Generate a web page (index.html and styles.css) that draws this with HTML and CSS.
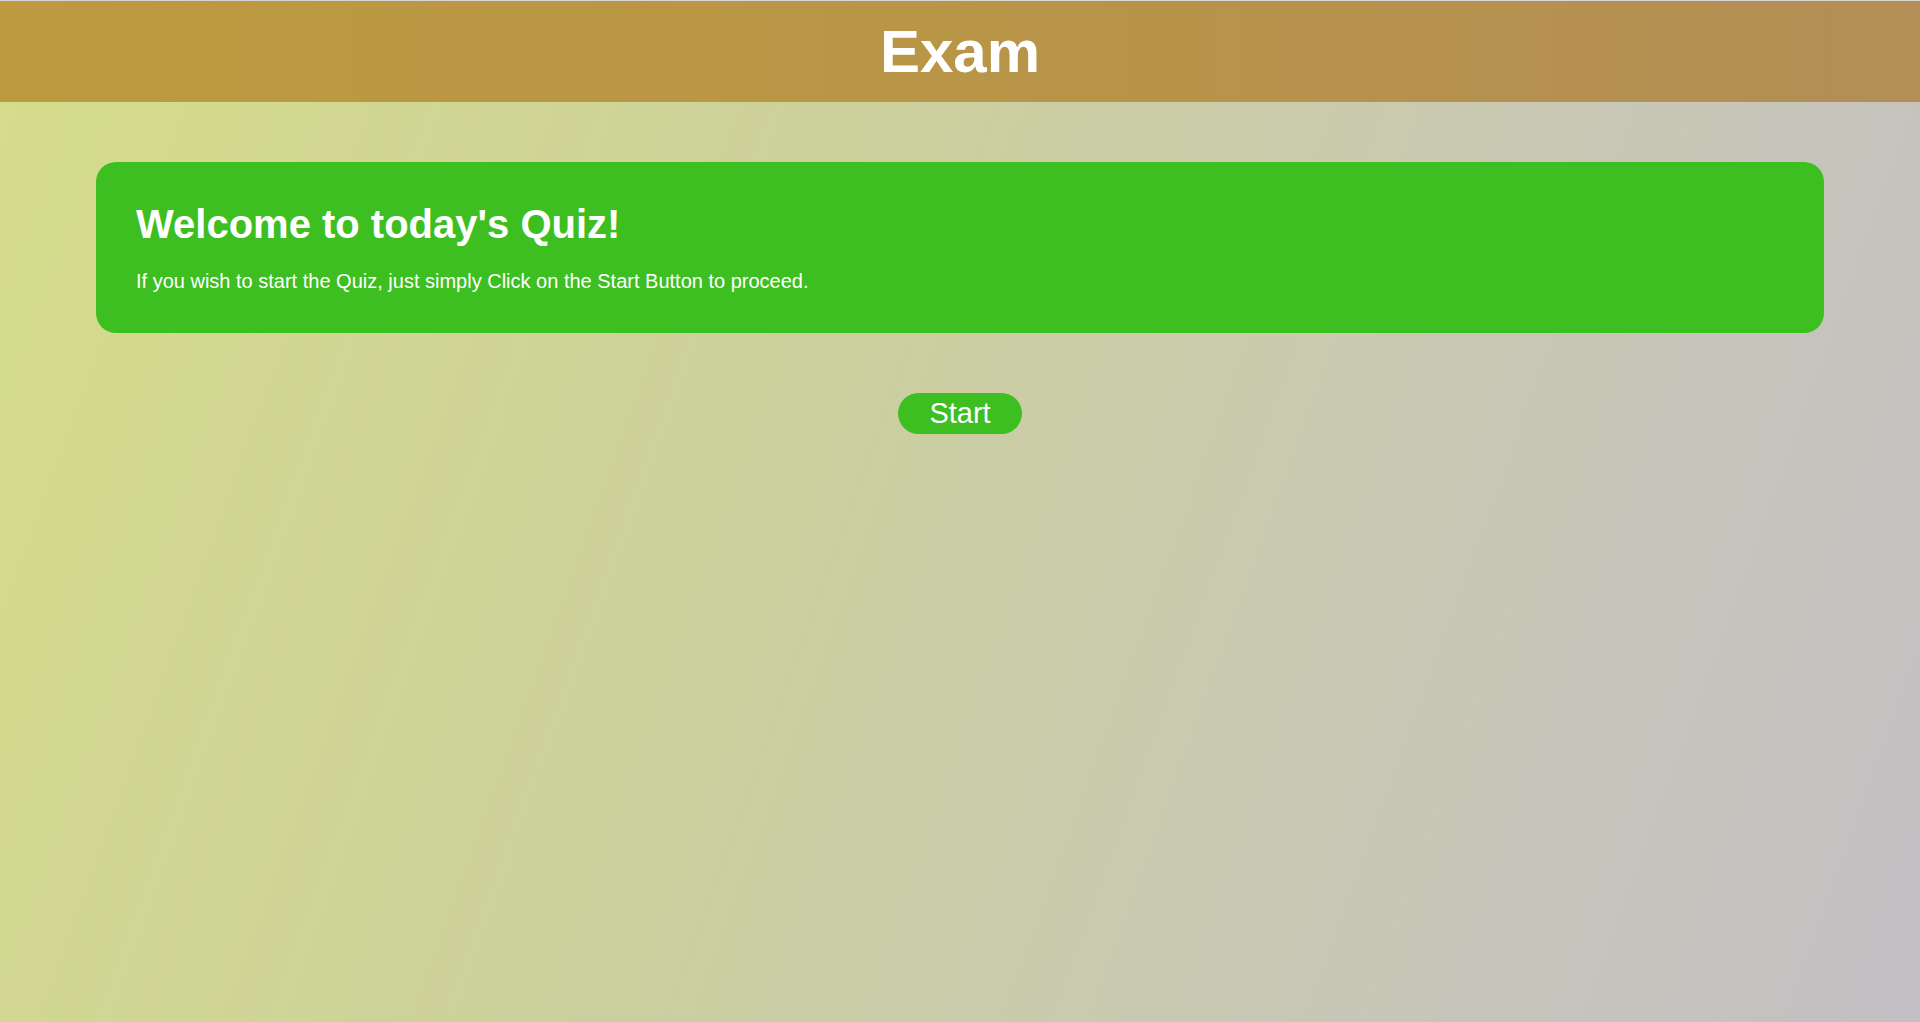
FILE: index.html
```html
<!DOCTYPE html>
<html lang="en">
<head>
<meta charset="utf-8">
<title>Exam</title>
<link rel="stylesheet" href="styles.css">
</head>
<body>
  <header class="topbar">
    <h1 class="topbar-title">Exam</h1>
  </header>
  <main class="content">
    <section class="welcome-card">
      <h2 class="welcome-title">Welcome to today's Quiz!</h2>
      <p class="welcome-text">If you wish to start the Quiz, just simply Click on the Start Button to proceed.</p>
    </section>
    <button class="start-btn" type="button">Start</button>
  </main>
</body>
</html>
```

FILE: styles.css
```css
html, body {
  margin: 0;
  padding: 0;
  height: 100%;
}

body {
  font-family: "Liberation Sans", Arial, sans-serif;
  background: linear-gradient(110deg, #d5dd8a 0%, #ccd09c 40%, #c8c8b4 70%, #c3bfc5 100%);
  border-top: 1px solid #d6d6d6;
  box-sizing: border-box;
  min-height: 1022px;
}

.topbar {
  background: linear-gradient(90deg, #bd9a40 0%, #b99547 50%, #b38e56 100%);
  padding: 16px 0;
  text-align: center;
}

.topbar-title {
  margin: 0;
  color: #ffffff;
  font-size: 60px;
  font-weight: bold;
  line-height: 69px;
}

.content {
  display: flex;
  flex-direction: column;
  align-items: center;
  padding-top: 60px;
}

.welcome-card {
  box-sizing: border-box;
  width: 90%;
  background: #3dbe21;
  border-radius: 20px;
  padding: 40px;
  color: #ffffff;
}

.welcome-title {
  margin: 0 0 24px;
  font-size: 40px;
  font-weight: bold;
  line-height: 44px;
}

.welcome-text {
  margin: 0;
  font-size: 20px;
  line-height: 23px;
}

.start-btn {
  margin-top: 60px;
  font-family: "Liberation Sans", Arial, sans-serif;
  font-size: 29px;
  line-height: 33px;
  color: #ffffff;
  background: #3dbe21;
  border: none;
  border-radius: 21px;
  padding: 4px 31px;
  height: 41px;
  cursor: pointer;
}
```
